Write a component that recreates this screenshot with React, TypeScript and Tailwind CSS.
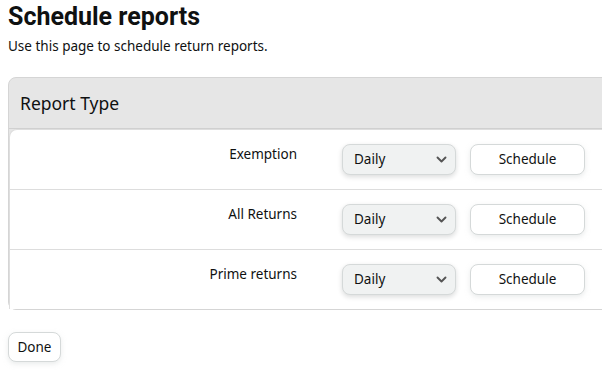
import React from "react";

const rows = ["Exemption", "All Returns", "Prime returns"];

function Chevron() {
  return (
    <svg width="11" height="11" viewBox="0 0 11 11" fill="none">
      <path d="M1.5 3.5 L5.5 7.5 L9.5 3.5" stroke="#555" strokeWidth="1.9" strokeLinecap="round" strokeLinejoin="round" />
    </svg>
  );
}

export default function App() {
  return (
    <div
      className="w-[602px] h-[371px] overflow-hidden bg-white text-[#0f1111]"
      style={{ fontFamily: '"Noto Sans", "Open Sans", Arial, sans-serif' }}
    >
      <div className="pl-2 pt-[1px]">
        <h1
          className="text-[25px] leading-[32px] font-bold"
          style={{ fontFamily: 'Roboto, "Noto Sans", Arial, sans-serif' }}
        >
          Schedule reports
        </h1>
        <p className="text-[13.5px] leading-[20px] mt-[3px]">Use this page to schedule return reports.</p>
        <div className="mt-[21px] w-[640px] border border-[#d5d5d5] rounded-lg bg-[#e6e6e6]">
          <div className="h-[51px] border-b border-[#d0d0d0] pl-[11px] flex items-center text-[17.5px]">Report Type</div>
          <div className="bg-white rounded-tl-lg border-l border-t border-[#dedede]">
            {rows.map((r, i) => (
              <div
                key={r}
                className={`flex items-start ${i < rows.length - 1 ? "h-[60px] border-b border-[#dddddd]" : "h-[59px]"}`}
              >
                <div className="w-[287px] text-right text-[13.5px] leading-[20px] pt-[14px]">{r}</div>
                <div className="ml-[45px] mt-[14px] w-[114px] h-[31px] rounded-lg bg-[#f0f2f2] border border-[#d5d9d9] shadow-[0_2px_5px_rgba(15,17,17,0.15)] flex items-center justify-between pl-[11px] pr-[8px] text-[13.5px]">
                  <span>Daily</span>
                  <Chevron />
                </div>
                <div className="ml-[14px] mt-[14px] w-[115px] h-[31px] rounded-lg bg-white border border-[#d5d9d9] shadow-[0_2px_5px_rgba(213,217,217,0.5)] flex items-center justify-center text-[13.5px]">
                  Schedule
                </div>
              </div>
            ))}
          </div>
        </div>
        <div className="mt-[22px] w-[53px] h-[30px] rounded-lg bg-white border border-[#d5d9d9] shadow-[0_2px_5px_rgba(213,217,217,0.5)] flex items-center justify-center text-[13.5px]">
          Done
        </div>
      </div>
    </div>
  );
}
